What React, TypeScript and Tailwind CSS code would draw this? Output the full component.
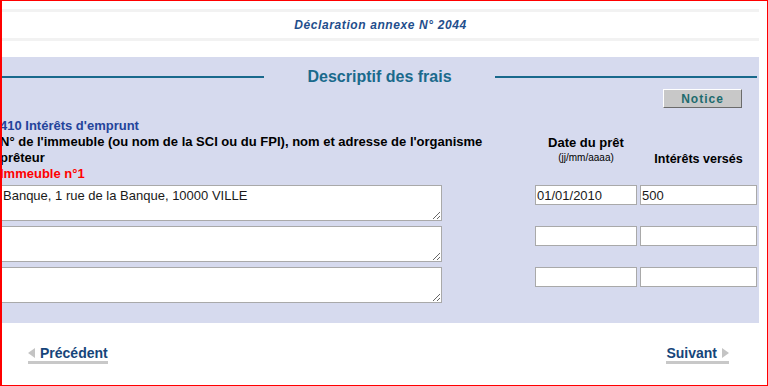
import React from "react";

const rows = [
  { text: "Banque, 1 rue de la Banque, 10000 VILLE", date: "01/01/2010", amount: "500" },
  { text: "", date: "", amount: "" },
  { text: "", date: "", amount: "" },
];

function NavLink({ label, dir }: { label: string; dir: "prev" | "next" }) {
  const arrow = (
    <svg width="7" height="10" viewBox="0 0 7 10" className="shrink-0">
      {dir === "prev" ? (
        <polygon points="7,0 7,10 0,5" fill="#c4c4c4" />
      ) : (
        <polygon points="0,0 0,10 7,5" fill="#c4c4c4" />
      )}
    </svg>
  );
  return (
    <a
      href="#"
      className="inline-flex items-center gap-[5px] border-b-[3px] border-[#c8c8c8] text-[14px] font-bold leading-[16px] text-[#16457a]"
    >
      {dir === "prev" && arrow}
      <span>{label}</span>
      {dir === "next" && arrow}
    </a>
  );
}

export default function App() {
  return (
    <div className="h-[386px] w-[768px] overflow-hidden border-b border-l-2 border-r border-t border-[#ff0000] bg-white font-['Liberation_Sans',Arial,sans-serif] text-black">
      <div className="pr-[8px] pt-[8px]">
        {/* Title band */}
        <div className="h-[3px] bg-[#f2f2f2]" />
        <div className="flex h-[26px] items-center justify-center">
          <span className="text-[12px] font-bold italic tracking-[0.6px] text-[#1f4e8c]">
            Déclaration annexe N° 2044
          </span>
        </div>
        <div className="h-[3px] bg-[#f2f2f2]" />

        {/* Panel */}
        <div className="mt-[16px] h-[266px] overflow-hidden bg-[#d6daee] pb-[20px] pt-[10px]">
          <div className="flex h-[20px] items-center pr-[2px]">
            <div className="h-[2px] flex-1 bg-[#19698c]" />
            <h2 className="mx-[43px] text-[16px] font-bold leading-[20px] text-[#1a6a8c]">
              Descriptif des frais
            </h2>
            <div className="h-[2px] flex-1 bg-[#19698c]" />
          </div>

          <div className="mt-[2px] flex justify-end pr-[17px]">
            <button className="h-[19px] w-[79px] border border-b-[#6b6b6b] border-l-white border-r-[#6b6b6b] border-t-white bg-[#c8c8c8] text-[12px] font-bold tracking-[1px] text-[#1d6b6e]">
              Notice
            </button>
          </div>

          {/* Header */}
          <div className="mt-[10px] flex text-[13px] leading-[16px]">
            <div className="-ml-[2px] w-[535px] shrink-0">
              <p className="font-bold text-[#24449b]">410 Intérêts d'emprunt</p>
              <p className="max-w-[505px] font-bold">
                N° de l'immeuble (ou nom de la SCI ou du FPI), nom et adresse de l'organisme prêteur
              </p>
              <p className="font-bold text-[#ff0000]">Immeuble n°1</p>
            </div>
            <div className="w-[102px] shrink-0 pt-[17px] text-center">
              <p className="font-bold">Date du prêt</p>
              <p className="text-[10px] leading-[14px]">(jj/mm/aaaa)</p>
            </div>
            <div className="ml-[3px] w-[117px] shrink-0 pt-[33px] text-center text-[12.5px] font-bold">
              Intérêts versés
            </div>
          </div>

          {/* Rows */}
          <div className="mt-[3px] flex flex-col gap-[5px]">
            {rows.map((row, i) => (
              <div key={i} className="flex items-start">
                <div className="-ml-[2px] w-[535px] shrink-0">
                  <textarea
                    defaultValue={row.text}
                    className="block h-[36px] w-[442px] border border-[#a9a9a9] bg-white px-[2px] py-[2px] text-[13px] leading-[15px] text-[#1a1a1a] outline-none"
                  />
                </div>
                <input
                  defaultValue={row.date}
                  className="h-[20px] w-[102px] shrink-0 border border-[#a9a9a9] bg-white px-[1px] text-[13px] text-[#1a1a1a] outline-none"
                />
                <input
                  defaultValue={row.amount}
                  className="ml-[3px] h-[20px] w-[117px] shrink-0 border border-[#a9a9a9] bg-white px-[1px] text-[13px] text-[#1a1a1a] outline-none"
                />
              </div>
            ))}
          </div>
        </div>

        {/* Footer nav */}
        <div className="flex justify-between pl-[26px] pr-[30px] pt-[22px]">
          <NavLink label="Précédent" dir="prev" />
          <NavLink label="Suivant" dir="next" />
        </div>
      </div>
    </div>
  );
}
